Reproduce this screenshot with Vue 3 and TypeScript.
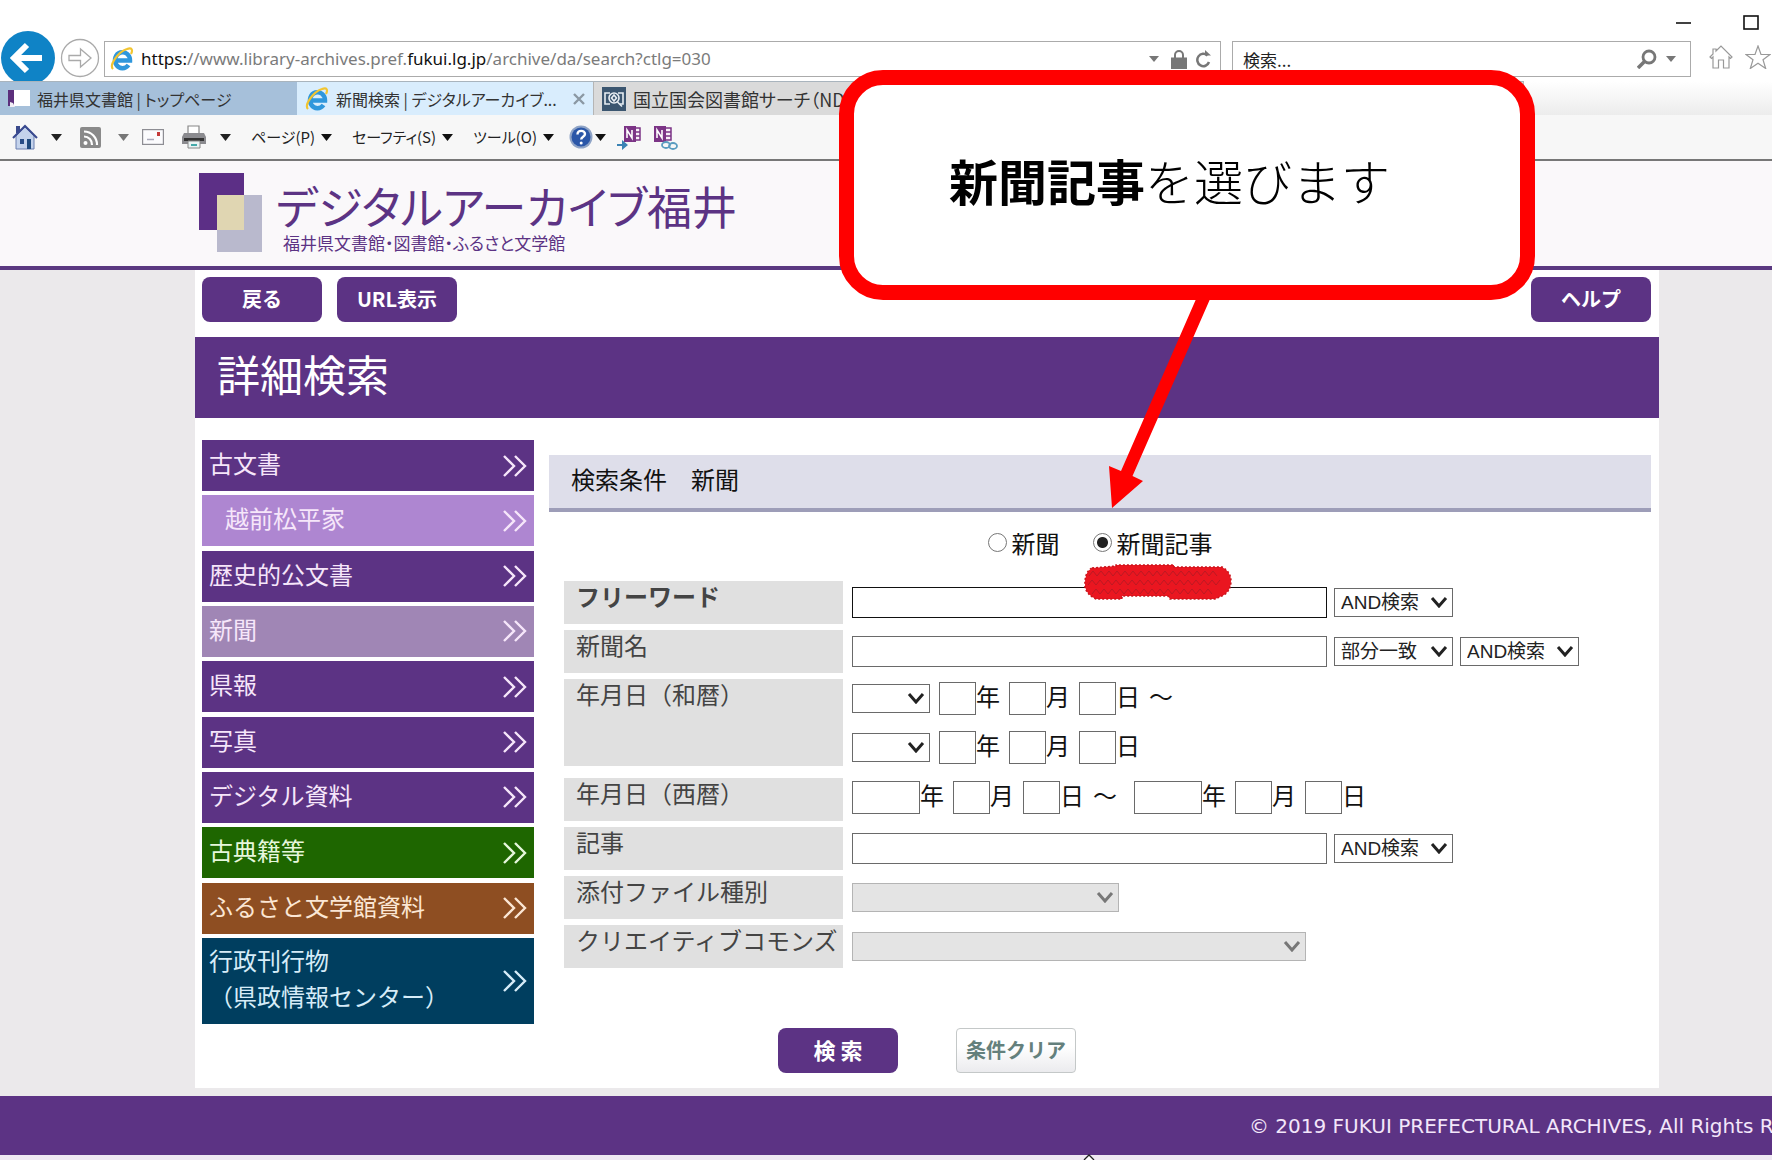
<script setup lang="ts">
import { ref } from 'vue'

interface NavItem {
  lines: string[]
  tone: string
  sub?: boolean
}

const navItems: NavItem[] = [
  { lines: ['古文書'], tone: 'purple' },
  { lines: ['越前松平家'], tone: 'lilac', sub: true },
  { lines: ['歴史的公文書'], tone: 'purple' },
  { lines: ['新聞'], tone: 'muted' },
  { lines: ['県報'], tone: 'purple' },
  { lines: ['写真'], tone: 'purple' },
  { lines: ['デジタル資料'], tone: 'purple' },
  { lines: ['古典籍等'], tone: 'green' },
  { lines: ['ふるさと文学館資料'], tone: 'brown' },
  { lines: ['行政刊行物', '（県政情報センター）'], tone: 'navy' },
]

const target = ref('article')
</script>

<template>
  <div class="window">
    <div class="titlebar">
      <button type="button" class="plain" aria-label="最小化">
        <svg width="16" height="16" viewBox="0 0 16 16"><path d="M1 8h15" stroke="#111" stroke-width="1.6" /></svg>
      </button>
      <button type="button" class="plain" aria-label="最大化">
        <svg width="16" height="16" viewBox="0 0 16 16"><rect x="1" y="1" width="14" height="13" fill="none" stroke="#111" stroke-width="1.6" /></svg>
      </button>
    </div>

    <div class="addressbar">
      <button type="button" class="plain back" aria-label="前に戻る">
        <svg width="56" height="54" viewBox="0 0 56 54">
          <circle cx="28" cy="27" r="27" fill="#0f83c6" />
          <path d="M42 27H15M27 14L14 27l13 13" fill="none" stroke="#fff" stroke-width="6" />
        </svg>
      </button>
      <button type="button" class="plain forward" aria-label="次に進む">
        <svg width="40" height="40" viewBox="0 0 40 40">
          <circle cx="20" cy="20" r="18.5" fill="#fff" stroke="#aaa" stroke-width="1.3" />
          <path d="M9 17.500h11.500v-6.500l10.500 9-10.500 9v-6.500H9z" fill="#fff" stroke="#aaa" stroke-width="1.3" />
        </svg>
      </button>
      <div class="urlbox">
        <svg class="ie" width="24" height="24" viewBox="0 0 24 24">
          <path d="M5 13.500H20A7.500 8 0 1 0 18.500 18" fill="none" stroke="#2f97dc" stroke-width="4.500" />
          <path d="M3 22C-1 18 8 5 17 2c5-2 6 1 4 5" fill="none" stroke="#f2c531" stroke-width="2.200" />
        </svg>
        <span class="url"><b>https:</b>//www.library-archives.pref.<b>fukui.lg.jp</b>/archive/da/search?ctlg=030</span>
        <svg class="tri" width="10" height="6" viewBox="0 0 10 6"><path d="M0 0h10L5 6z" fill="#777" /></svg>
        <svg class="lock" width="16" height="19" viewBox="0 0 16 19">
          <rect y="7.500" width="16" height="11.500" fill="#777" />
          <path d="M4 8V5a4 4 0 0 1 8 0v3" fill="none" stroke="#777" stroke-width="2" />
        </svg>
        <svg class="reload" width="17" height="18" viewBox="0 0 17 18">
          <path d="M12.500 5.500A6 6.200 0 1 0 14 12" fill="none" stroke="#777" stroke-width="2.500" />
          <path d="M10 0v5.500h6z" fill="#777" />
        </svg>
      </div>
      <div class="findbox">
        <input type="text" value="検索..." aria-label="検索" />
        <svg width="20" height="20" viewBox="0 0 20 20">
          <circle cx="12" cy="8" r="6" fill="none" stroke="#777" stroke-width="2.800" />
          <path d="M8 12L1 19" stroke="#777" stroke-width="3.500" />
        </svg>
        <svg width="10" height="6" viewBox="0 0 10 6"><path d="M0 0h10L5 6z" fill="#777" /></svg>
      </div>
      <div class="favs">
        <svg width="24" height="24" viewBox="0 0 24 24">
          <path d="M1 12L4 9V4h3v2l5-5 11 11-1.500 1.500L20 12v11h-5.500v-8h-5v8H4V12l-1.500 1.500z" fill="#fff" stroke="#999" stroke-width="1.200" />
        </svg>
        <svg width="26" height="24" viewBox="0 0 26 24">
          <path d="M13 1l3 8.500h9l-7 5.300 2.700 8.700L13 18.200 5.300 23.500 8 14.800 1 9.500h9z" fill="#fff" stroke="#999" stroke-width="1.200" />
        </svg>
      </div>
    </div>

    <div class="tabs">
      <div class="tab first">
        <svg width="22" height="17" viewBox="0 0 22 17">
          <rect x="5" width="17" height="16" fill="#fff" />
          <path d="M0 0h6v16H0z" fill="#5c2f7c" />
          <path d="M2 12l3 1 2 4H2z" fill="#f1eef5" />
        </svg>
        <span>福井県文書館 | トップページ</span>
      </div>
      <div class="tab active">
        <svg width="24" height="24" viewBox="0 0 24 24">
          <path d="M5 13.500H20A7.500 8 0 1 0 18.500 18" fill="none" stroke="#2f97dc" stroke-width="4.500" />
          <path d="M3 22C-1 18 8 5 17 2c5-2 6 1 4 5" fill="none" stroke="#f2c531" stroke-width="2.200" />
        </svg>
        <span>新聞検索 | デジタルアーカイブ...</span>
        <button type="button" class="plain close" aria-label="タブを閉じる">
          <svg width="12" height="12" viewBox="0 0 12 12"><path d="M1 1l10 10M11 1L1 11" stroke="#8b98a3" stroke-width="2.400" /></svg>
        </button>
      </div>
      <div class="tab third">
        <svg width="24" height="24" viewBox="0 0 24 24">
          <rect width="24" height="24" fill="#3b5670" />
          <path d="M8 6H3v11h5M16 6h5v11h-3" fill="none" stroke="#e8eef3" stroke-width="1.600" />
          <circle cx="12" cy="11" r="5" fill="#3b5670" stroke="#e8eef3" stroke-width="1.600" />
          <path d="M12 8l2.500 3-2.500 3-2.500-3zM15.500 15l4.500 4.500" fill="none" stroke="#e8eef3" stroke-width="1.600" />
        </svg>
        <span>国立国会図書館サーチ（ND</span>
      </div>
      <div class="tabspace"></div>
    </div>

    <div class="commands">
      <svg class="i-home" width="26" height="26" viewBox="0 0 26 26">
        <path d="M4 2h4v7H4z" fill="#3a4a8c" />
        <path d="M4 12l9-9 9 9v13H4z" fill="#c4d3ec" stroke="#6a7fb0" />
        <path d="M1 14L13 2l12 12" fill="none" stroke="#39498f" stroke-width="2" />
        <rect x="8" y="15" width="4" height="5" fill="#284c86" /><rect x="15" y="15" width="4" height="10" fill="#1f4a7e" />
      </svg>
      <svg class="drop" width="11" height="7" viewBox="0 0 11 7"><path d="M0 0h11L5.500 7z" fill="#222" /></svg>
      <svg class="i-rss" width="21" height="21" viewBox="0 0 21 21">
        <rect width="21" height="21" rx="2" fill="#8a8a8a" />
        <circle cx="5.500" cy="16" r="2" fill="#fff" />
        <path d="M4 9.500a8 8 0 0 1 8 8.500M4 4.500a13 13 0 0 1 13 13.500" fill="none" stroke="#fff" stroke-width="2.200" />
      </svg>
      <svg class="drop" width="11" height="7" viewBox="0 0 11 7"><path d="M0 0h11L5.500 7z" fill="#777" /></svg>
      <svg class="i-mail" width="22" height="16" viewBox="0 0 22 16">
        <rect x=".6" y=".6" width="20.800" height="14.800" fill="#fbfbfd" stroke="#8d8d93" stroke-width="1.200" />
        <rect x="15" y="3" width="3" height="4" fill="#c53a3a" /><path d="M5 10.500h7" stroke="#aab" stroke-width="1.500" />
      </svg>
      <svg class="i-print" width="24" height="24" viewBox="0 0 24 24">
        <path d="M6 9V1h11v8" fill="#fff" stroke="#888" stroke-width="1.200" />
        <path d="M2 8h20l2 4v7H0v-7z" fill="#8b8b8f" /><path d="M2 13h20v3H2z" fill="#333" />
        <path d="M6 16h12v7H6z" fill="#eaf3f3" stroke="#888" />
        <path d="M9 20h6" stroke="#4aa" stroke-width="2" />
      </svg>
      <svg class="drop" width="11" height="7" viewBox="0 0 11 7"><path d="M0 0h11L5.500 7z" fill="#222" /></svg>
      <button type="button" class="plain menu">ページ(P)<svg width="11" height="7" viewBox="0 0 11 7"><path d="M0 0h11L5.500 7z" fill="#111" /></svg></button>
      <button type="button" class="plain menu">セーフティ(S)<svg width="11" height="7" viewBox="0 0 11 7"><path d="M0 0h11L5.500 7z" fill="#111" /></svg></button>
      <button type="button" class="plain menu">ツール(O)<svg width="11" height="7" viewBox="0 0 11 7"><path d="M0 0h11L5.500 7z" fill="#111" /></svg></button>
      <svg class="i-help" width="24" height="24" viewBox="0 0 24 24">
        <circle cx="12" cy="12" r="11.500" fill="#8ea3c6" /><circle cx="12" cy="12" r="9.500" fill="#2b57a8" />
        <path d="M8.500 9.500c0-5 7.500-4.500 7.500-.5 0 3-3.800 2.500-3.800 5.500" fill="none" stroke="#fff" stroke-width="2.400" />
        <circle cx="12.200" cy="18" r="1.500" fill="#fff" />
      </svg>
      <svg class="drop" width="11" height="7" viewBox="0 0 11 7"><path d="M0 0h11L5.500 7z" fill="#111" /></svg>
      <svg class="i-note" width="25" height="25" viewBox="0 0 25 25">
        <path d="M7 1h12v16H7z" fill="#7c3486" /><path d="M19 3h4v12h-4M19 7h4M19 11h4" fill="#f7eef8" stroke="#7c3486" stroke-width="1.500" />
        <path d="M10 13V5l5 8V5" fill="none" stroke="#fff" stroke-width="1.600" />
        <path d="M0 19h5v-4l6 5-6 5v-4H0z" fill="#3b83b4" />
      </svg>
      <svg class="i-note" width="25" height="25" viewBox="0 0 25 25">
        <path d="M1 1h12v16H1z" fill="#7c3486" /><path d="M13 3h5v12h-5M13 7h5M13 11h5" fill="#f7eef8" stroke="#7c3486" stroke-width="1.500" />
        <path d="M4 13V5l5 8V5" fill="none" stroke="#fff" stroke-width="1.600" />
        <ellipse cx="13" cy="20" rx="4" ry="3" fill="none" stroke="#5a9cc0" stroke-width="1.800" />
        <ellipse cx="20" cy="21" rx="4" ry="3" fill="none" stroke="#5a9cc0" stroke-width="1.800" />
      </svg>
    </div>

    <header class="site">
      <svg width="63" height="79" viewBox="0 0 63 79">
        <rect width="45" height="57" fill="#5c2f86" />
        <rect x="18" y="22" width="45" height="57" fill="#b9b9cd" />
        <rect x="18" y="22" width="27" height="35" fill="#e0d6b2" />
      </svg>
      <div class="brand">
        <h1>デジタルアーカイブ福井</h1>
        <p>福井県文書館・図書館・ふるさと文学館</p>
      </div>
    </header>

    <main class="page">
      <div class="toolbar">
        <button type="button" class="btn">戻る</button>
        <button type="button" class="btn">URL表示</button>
        <button type="button" class="btn help">ヘルプ</button>
      </div>
      <h2>詳細検索</h2>
      <form @submit.prevent>
        <div class="columns">
          <nav>
            <a v-for="item in navItems" :key="item.lines[0]" href="#" :class="['nav', item.tone, { sub: item.sub, tall: item.lines.length > 1 }]">
              <span><template v-for="(line, i) in item.lines" :key="line"><br v-if="i > 0" />{{ line }}</template></span>
              <svg width="24" height="22" viewBox="0 0 24 22">
                <path d="M1 1l10 10L1 21M12 1l10 10-10 10" fill="none" stroke="currentColor" stroke-width="2.400" />
              </svg>
            </a>
          </nav>
          <section class="panel">
            <h3>検索条件　新聞</h3>
            <div class="radios">
              <label><input v-model="target" type="radio" name="target" value="paper" />新聞</label>
              <label><input v-model="target" type="radio" name="target" value="article" />新聞記事</label>
            </div>
            <div class="fields">
              <div class="row">
                <label class="name strong" for="free">フリーワード</label>
                <div class="controls">
                  <input id="free" type="text" class="wide dark" />
                  <span class="pick op"><select aria-label="フリーワードの条件"><option>AND検索</option></select><svg width="18" height="12" viewBox="0 0 18 12"><path d="M2 2l7 8 7-8" /></svg></span>
                </div>
              </div>
              <div class="row">
                <label class="name" for="paper">新聞名</label>
                <div class="controls">
                  <input id="paper" type="text" class="wide" />
                  <span class="pick op"><select aria-label="一致の種類"><option>部分一致</option></select><svg width="18" height="12" viewBox="0 0 18 12"><path d="M2 2l7 8 7-8" /></svg></span>
                  <span class="pick op"><select aria-label="新聞名の条件"><option>AND検索</option></select><svg width="18" height="12" viewBox="0 0 18 12"><path d="M2 2l7 8 7-8" /></svg></span>
                </div>
              </div>
              <div class="row double">
                <label class="name" for="era1">年月日（和暦）</label>
                <div class="dates">
                  <div class="date">
                    <span class="pick era"><select id="era1"><option></option></select><svg width="18" height="12" viewBox="0 0 18 12"><path d="M2 2l7 8 7-8" /></svg></span>
                    <label><input type="text" class="two" />年</label>
                    <label><input type="text" class="two" />月</label>
                    <label><input type="text" class="two" />日</label>
                    <span class="wave">～</span>
                  </div>
                  <div class="date">
                    <span class="pick era"><select aria-label="元号（終了）"><option></option></select><svg width="18" height="12" viewBox="0 0 18 12"><path d="M2 2l7 8 7-8" /></svg></span>
                    <label><input type="text" class="two" />年</label>
                    <label><input type="text" class="two" />月</label>
                    <label><input type="text" class="two" />日</label>
                  </div>
                </div>
              </div>
              <div class="row">
                <label class="name" for="year1">年月日（西暦）</label>
                <div class="date">
                  <label><input id="year1" type="text" class="four" />年</label>
                  <label><input type="text" class="two" />月</label>
                  <label><input type="text" class="two" />日</label>
                  <span class="wave range">～</span>
                  <label><input type="text" class="four" />年</label>
                  <label><input type="text" class="two" />月</label>
                  <label><input type="text" class="two" />日</label>
                </div>
              </div>
              <div class="row">
                <label class="name" for="article">記事</label>
                <div class="controls">
                  <input id="article" type="text" class="wide" />
                  <span class="pick op"><select aria-label="記事の条件"><option>AND検索</option></select><svg width="18" height="12" viewBox="0 0 18 12"><path d="M2 2l7 8 7-8" /></svg></span>
                </div>
              </div>
              <div class="row">
                <label class="name" for="attach">添付ファイル種別</label>
                <div class="controls">
                  <span class="pick off mid"><select id="attach" disabled><option></option></select><svg width="18" height="12" viewBox="0 0 18 12"><path d="M2 2l7 8 7-8" /></svg></span>
                </div>
              </div>
              <div class="row">
                <label class="name" for="cc">クリエイティブコモンズ</label>
                <div class="controls">
                  <span class="pick off long"><select id="cc" disabled><option></option></select><svg width="18" height="12" viewBox="0 0 18 12"><path d="M2 2l7 8 7-8" /></svg></span>
                </div>
              </div>
            </div>
          </section>
        </div>
        <div class="actions">
          <button type="submit" class="btn search">検 索</button>
          <button type="reset" class="btn clear">条件クリア</button>
        </div>
      </form>
    </main>

    <footer>© 2019 FUKUI PREFECTURAL ARCHIVES, All Rights Reserved.</footer>
    <div class="edge"></div>

    <!-- Tutorial annotations laid over the page -->
    <div class="callout"><p><b>新聞記事</b>を選びます</p></div>
    <svg class="arrow" width="120" height="220" viewBox="0 0 120 220">
      <path d="M100 0h14L32.500 186l10.500 5L12 218 9 176l12 5z" fill="#f00" />
    </svg>
    <svg class="marker" width="148" height="36" viewBox="0 0 148 36">
      <path d="M8 4L32 2V1h58v2h48q9 5 9 14t-7 14l-9 4H86l-2-3H38v3H12q-9-4-11-12Q0 8 8 4z" fill="#ea1620" />
      <path d="M5 12l4-5 4 5 4-5 4 5 4-5 4 5 4-5 4 5 4-5 4 5 4-5 4 5 4-5 4 5 4-5 4 5 4-5 4 5 4-5 4 5 4-5 4 5 4-5 4 5 4-5 4 5 4-5 4 5 4-5 4 5 4-5 4 5M4 21l4-5 4 5 4-5 4 5 4-5 4 5 4-5 4 5 4-5 4 5 4-5 4 5 4-5 4 5 4-5 4 5 4-5 4 5 4-5 4 5 4-5 4 5 4-5 4 5 4-5 4 5 4-5 4 5 4-5 4 5 4-5 4 5 4-5M8 30l4-5 4 5 4-5 4 5 4-5 4 5 4-5 4 5 4-5 4 5 4-5 4 5 4-5 4 5 4-5 4 5 4-5 4 5 4-5 4 5 4-5 4 5 4-5 4 5 4-5 4 5 4-5 4 5 4-5 4 5" fill="none" stroke="#bb1a24" stroke-width="1" />
      <path d="M8 4L32 2V1h58v2h48q9 5 9 14t-7 14l-9 4H86l-2-3H38v3H12q-9-4-11-12Q0 8 8 4z" fill="none" stroke="#c8141c" stroke-width="1.500" stroke-dasharray="2 2" />
    </svg>
    <svg class="pointer" width="12" height="6" viewBox="0 0 12 6"><path d="M1 6l5-5 5 5" fill="#fff" stroke="#222" stroke-width="1.300" /></svg>
  </div>
</template>

<style>
body {
  margin: 0;
  background: #ebe9eb;
}
</style>

<style scoped>
* {
  box-sizing: border-box;
}
.window {
  position: relative;
  overflow: hidden;
  font-family: "Noto Sans CJK JP", sans-serif;
  font-size: 24px;
  color: #111;
}
button,
input,
select {
  font-family: inherit;
  margin: 0;
}
svg {
  display: block;
  flex: none;
}
.plain {
  border: 0;
  padding: 0;
  background: none;
  flex: none;
}
.titlebar {
  height: 31px;
  padding: 15px 13px 0 0;
  display: flex;
  justify-content: flex-end;
  gap: 52px;
  background: #fff;
}
.addressbar {
  height: 50px;
  display: flex;
  align-items: flex-start;
  background: #fff;
}
.back {
  height: 50px;
  overflow: hidden;
}
.forward {
  margin: 7px 4px 0;
}
.urlbox,
.findbox {
  height: 36px;
  margin-top: 10px;
  border: 1px solid #ababab;
  display: flex;
  align-items: center;
  background: #fff;
}
.urlbox {
  flex: 1;
  min-width: 0;
  padding: 0 8px 0 5px;
}
.url {
  flex: 1;
  margin-left: 7px;
  font-family: "Noto Sans", sans-serif;
  font-size: 17px;
  line-height: 32px;
  white-space: nowrap;
  color: #7b7b7b;
}
.url b {
  font-weight: 400;
  color: #111;
}
.lock {
  margin: 0 8px 0 12px;
}
.findbox {
  width: 459px;
  margin-left: 11px;
  padding: 0 14px 0 10px;
}
.findbox input {
  flex: 1;
  min-width: 0;
  border: 0;
  padding: 0;
  font-size: 17px;
  color: #222;
  background: none;
}
.findbox svg + svg {
  margin-left: 9px;
}
.favs {
  display: flex;
  gap: 12px;
  margin: 14px 1px 0 18px;
}
.tabs {
  display: flex;
  height: 34px;
}
.tab {
  width: 297px;
  display: flex;
  align-items: center;
  gap: 7px;
  padding: 0 8px;
  border-top: 1px solid #a9b4bd;
  border-right: 1px solid #b5b5b5;
  font-size: 16px;
  line-height: 30px;
  font-feature-settings: "palt";
  white-space: nowrap;
  color: #333;
}
.tab.first {
  background: #a6c0da;
  border-right: 0;
}
.tab.active {
  background: #d9edfd;
}
.tab .close {
  margin-left: auto;
}
.tab.third {
  width: 930px;
  background: #dadada;
  font-size: 18px;
}
.tabspace {
  flex: 1;
  background: linear-gradient(#fff, #ececec);
}
.commands {
  height: 46px;
  padding: 0 12px;
  border-bottom: 2px solid #777;
  background: #f7f7f7;
  display: flex;
  align-items: center;
}
.i-home {
  margin-right: 13px;
}
.i-rss {
  margin: 0 17px 0 18px;
}
.i-mail {
  margin: 0 18px 0 13px;
}
.i-print {
  margin-right: 14px;
}
.menu {
  display: flex;
  align-items: center;
  gap: 6px;
  margin-left: 20px;
  font-size: 15px;
  line-height: 30px;
  font-feature-settings: "palt";
  color: #222;
}
.i-help {
  margin: 0 2px 0 15px;
}
.i-note {
  margin-left: 11px;
}
.site {
  height: 109px;
  padding: 12px 0 0 199px;
  display: flex;
  gap: 14px;
  background: #faf8fa;
  border-bottom: 4px solid #5a3880;
  color: #5c3384;
}
.site h1 {
  margin: 7px 0 0;
  font-size: 45px;
  font-weight: 400;
  line-height: 51px;
  font-feature-settings: "palt";
}
.site p {
  margin: 0 0 0 7px;
  font-size: 17px;
  line-height: 24px;
  font-feature-settings: "palt";
}
.page {
  margin: 0 113px 8px 195px;
  padding-bottom: 15px;
  background: #fff;
}
.toolbar {
  display: flex;
  gap: 15px;
  padding: 7px 8px 15px 7px;
}
.btn {
  width: 120px;
  height: 45px;
  border: 0;
  border-radius: 8px;
  padding: 0 0 3px;
  background: #5c3384;
  color: #fff;
  font-size: 20px;
  font-weight: 700;
  white-space: nowrap;
}
.btn.help {
  margin-left: auto;
}
.page h2 {
  margin: 0;
  height: 81px;
  padding: 0 22px;
  background: #5c3384;
  color: #fff;
  font-size: 43px;
  font-weight: 400;
  line-height: 72px;
}
.columns {
  display: flex;
  align-items: flex-start;
  gap: 15px;
  padding: 22px 8px 4px 7px;
}
nav {
  width: 332px;
  min-height: 584px;
  flex: none;
  display: flex;
  flex-direction: column;
  justify-content: space-between;
}
.nav {
  min-height: 51px;
  padding: 0 7px;
  display: flex;
  align-items: center;
  justify-content: space-between;
  color: #f6e6fa;
  line-height: 36px;
  text-decoration: none;
  white-space: nowrap;
}
.nav span {
  padding-bottom: 5px;
}
.nav.sub {
  padding-left: 23px;
}
.nav.tall {
  min-height: 86px;
}
.purple {
  background: #5c3384;
}
.lilac {
  background: #ae86d1;
}
.muted {
  background: #a086b5;
}
.green {
  background: #1e6600;
  color: #e6f7dc;
}
.brown {
  background: #8e4e22;
  color: #fbe6d4;
}
.navy {
  background: #003e5f;
  color: #d6ecf8;
}
.panel {
  flex: 1;
  min-width: 0;
  margin-top: 15px;
}
.panel h3 {
  margin: 0;
  height: 57px;
  padding: 0 22px;
  background: #dedeea;
  border-bottom: 4px solid #9d9db8;
  font-size: 24px;
  font-weight: 400;
  line-height: 48px;
}
.radios {
  height: 69px;
  padding-top: 12px;
  display: flex;
  justify-content: center;
  gap: 33px;
}
.radios label {
  display: flex;
  align-items: center;
  gap: 5px;
  height: 36px;
}
.radios input {
  appearance: none;
  width: 19px;
  height: 19px;
  border: 1px solid #777;
  border-radius: 50%;
  background: #fff;
}
.radios input:checked {
  background: radial-gradient(circle, #222 5px, #fff 6px);
}
.fields {
  display: flex;
  flex-direction: column;
  gap: 6px;
  padding-left: 15px;
}
.row {
  display: grid;
  grid-template-columns: 279px 1fr;
  column-gap: 9px;
  min-height: 43px;
}
.row.double {
  margin-bottom: 6px;
}
.name {
  padding-left: 12px;
  background: #e0e0e0;
  color: #444;
  line-height: 30px;
  white-space: nowrap;
}
.strong {
  font-weight: 700;
}
.controls {
  display: flex;
  align-items: center;
  gap: 7px;
}
input[type="text"].wide,
.two,
.four {
  border: 1px solid #6a6a6a;
  padding: 0 4px;
  font-size: 20px;
  background: #fff;
}
.wide {
  width: 475px;
  height: 31px;
}
input[type="text"].dark {
  border-color: #111;
}
.two {
  width: 37px;
  height: 33px;
}
.four {
  width: 68px;
  height: 33px;
}
.pick {
  position: relative;
  display: block;
}
.pick select {
  appearance: none;
  display: block;
  width: 100%;
  height: 29px;
  padding: 0 6px;
  border: 1px solid #6a6a6a;
  border-radius: 0;
  background: #fff;
  color: #222;
  opacity: 1;
  font-family: "Liberation Sans", "Noto Sans CJK JP", sans-serif;
  font-size: 19px;
  line-height: 24px;
}
.pick svg {
  position: absolute;
  right: 5px;
  top: 8px;
  fill: none;
  stroke: #222;
  stroke-width: 3;
  pointer-events: none;
}
.op {
  width: 119px;
}
.era {
  width: 78px;
}
.mid {
  width: 267px;
}
.long {
  width: 454px;
}
.pick.off select {
  background: #e4e4e4;
  border-color: #b4b4b4;
}
.pick.off svg {
  stroke: #777;
}
.dates {
  display: flex;
  flex-direction: column;
  gap: 11px;
}
.date {
  display: flex;
  align-items: center;
  gap: 9px;
  height: 38px;
  line-height: 27px;
}
.date label {
  display: flex;
  align-items: flex-start;
}
.date .wave {
  height: 33px;
}
.range {
  margin-right: 8px;
}
.actions {
  display: flex;
  justify-content: center;
  gap: 58px;
}
.btn.search {
  font-size: 22px;
}
.btn.clear {
  border: 1px solid #c4c8c8;
  border-radius: 4px;
  background: linear-gradient(#fff 40%, #ebebee);
  color: #64807c;
}
footer {
  height: 59px;
  padding-left: 1249px;
  overflow: hidden;
  background: #5c3384;
  color: #f3e6fa;
  font-family: "DejaVu Sans", sans-serif;
  font-size: 17px;
  line-height: 60px;
  white-space: nowrap;
}
.edge {
  height: 5px;
  background: #efe8f3;
}
.callout {
  position: absolute;
  left: 839px;
  top: 70px;
  width: 696px;
  height: 230px;
  border: 15px solid #f00;
  border-radius: 44px;
  background: #fff;
}
.callout p {
  margin: 0;
  padding: 60px 95px 0;
  font-size: 49px;
  font-weight: 300;
  line-height: 70px;
  color: #000;
  white-space: nowrap;
}
.callout b {
  font-weight: 700;
}
.arrow {
  position: absolute;
  left: 1100px;
  top: 290px;
}
.marker {
  position: absolute;
  left: 1084px;
  top: 564px;
}
.pointer {
  position: absolute;
  left: 1083px;
  top: 1154px;
}

footer {
  font-size: 20px;
}
</style>
